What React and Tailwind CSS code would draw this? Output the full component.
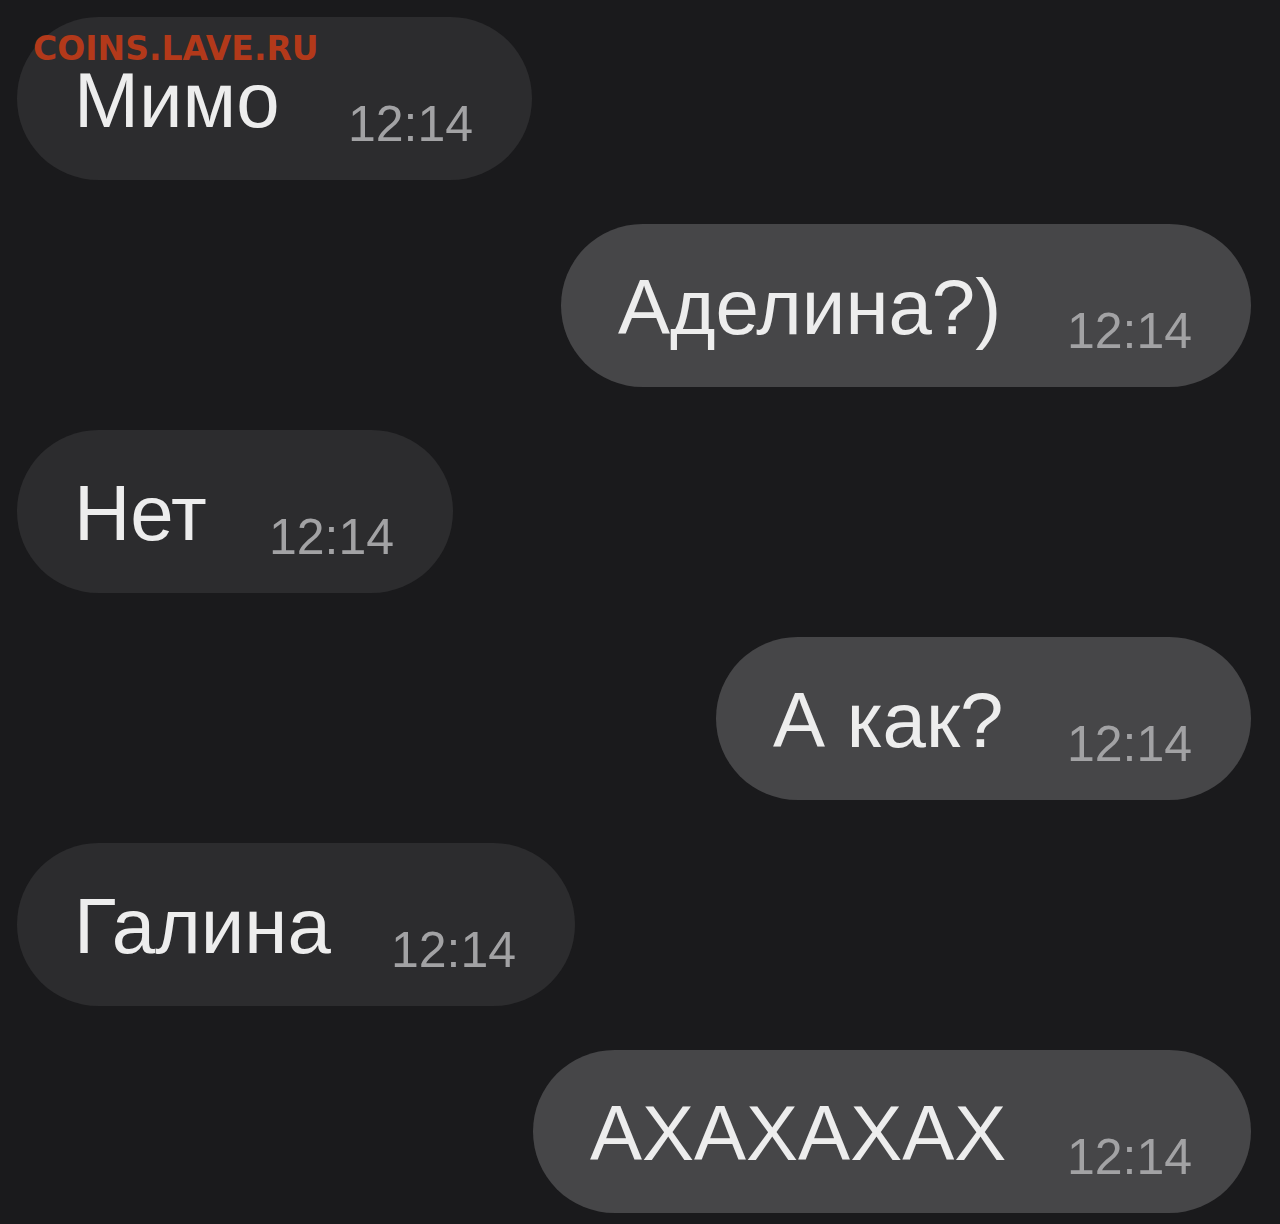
const messages = [
  { id: 1, text: "Мимо", mine: false, width: "w-[515px]" },
  { id: 2, text: "Аделина?)", mine: true, width: "w-[690px]" },
  { id: 3, text: "Нет", mine: false, width: "w-[436px]" },
  { id: 4, text: "А как?", mine: true, width: "w-[535px]" },
  { id: 5, text: "Галина", mine: false, width: "w-[558px]" },
  { id: 6, text: "АХАХАХАХ", mine: true, width: "w-[718px]" },
];

function Bubble({ msg }) {
  return (
    <div className={msg.mine ? "flex justify-end" : "flex justify-start"}>
      <div
        className={`${msg.width} h-[163px] rounded-full flex items-start justify-between pl-[57px] pr-[59px] ${
          msg.mine ? "bg-[#464648]" : "bg-[#2c2c2e]"
        }`}
      >
        <span className="mt-[55px] text-[78px] leading-[56px] text-[#ededed]">
          {msg.text}
        </span>
        <span className="mt-[82px] text-[50px] leading-none text-[#a2a2a4]">
          12:14
        </span>
      </div>
    </div>
  );
}

export default function App() {
  return (
    <div
      className="relative w-[1280px] h-[1224px] bg-[#1a1a1c] overflow-hidden"
      style={{ fontFamily: '"Liberation Sans", Arial, sans-serif' }}
    >
      <div className="flex flex-col gap-[43.6px] pt-[17px] pl-[17px] pr-[29px]">
        {messages.map((m) => (
          <Bubble key={m.id} msg={m} />
        ))}
      </div>

      {/* watermark */}
      <div
        className="absolute left-[33px] top-[37px] text-[33px] leading-[24px] font-bold text-[#b3391a]"
        style={{ fontFamily: '"DejaVu Sans", Verdana, sans-serif' }}
      >
        COINS.LAVE.RU
      </div>
    </div>
  );
}
